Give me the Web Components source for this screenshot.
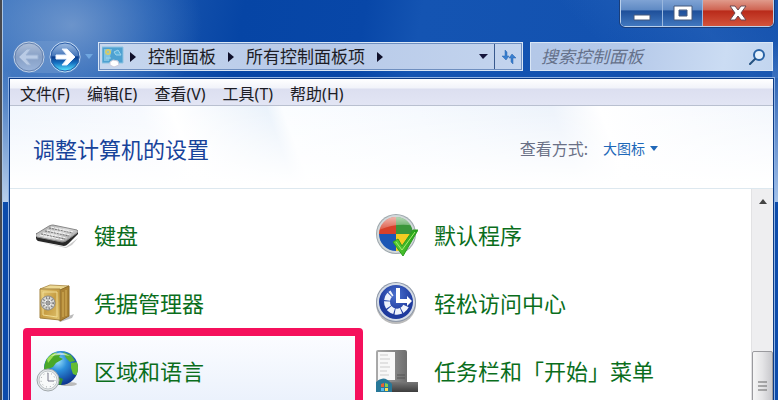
<!DOCTYPE html>
<html lang="zh-CN">
<head>
<meta charset="utf-8">
<title>所有控制面板项</title>
<style>
    body {
        margin: 0;
        height: 100vh;
        overflow: hidden;
        font-family: "Noto Sans", "Noto Sans CJK SC", sans-serif;
        font-size: 16px;
        line-height: 24px;
        color: #1c1c24;
    }
</style>
</head>
<body>
<cp-window>
    <cp-caption slot="caption"></cp-caption>
    <cp-nav slot="bar"></cp-nav>
    <cp-address slot="bar">
        <button>控制面板</button>
        <button>所有控制面板项</button>
    </cp-address>
    <cp-search slot="bar" label="搜索控制面板"></cp-search>
    <cp-menu>
        <button>文件(F)</button>
        <button>编辑(E)</button>
        <button>查看(V)</button>
        <button>工具(T)</button>
        <button>帮助(H)</button>
    </cp-menu>
    <cp-header>调整计算机的设置</cp-header>
    <cp-list>
        <cp-item icon="keyboard">键盘</cp-item>
        <cp-item icon="defaults">默认程序</cp-item>
        <cp-item icon="safe">凭据管理器</cp-item>
        <cp-item icon="access">轻松访问中心</cp-item>
        <cp-item icon="region" marked>区域和语言</cp-item>
        <cp-item icon="taskbar">任务栏和「开始」菜单</cp-item>
    </cp-list>
</cp-window>

<script>
const icons = {
    keyboard: `
        <defs><linearGradient id="k" x2="1" y2="1"><stop stop-color="#999"/><stop offset=".5" stop-color="#dcdcdc"/><stop offset="1" stop-color="#8a8a8a"/></linearGradient></defs>
        <path d="M4 28 30 33 42 24 36 31 30 34Z" fill="#ccc"/>
        <path d="M0 19v5q0 2 2 3l26 5q2 0 4-2l10-10v-3L28 27Z" fill="#282828"/>
        <path d="M0 20 13 12q2-1 4-1l24 5q2 1 0 3L30 27q-2 1-4 1L1 23q-2-1-1-3Z" fill="url(#k)" stroke="#888"/>
        <path d="M5 20l24 5M9 17l24 5M13 14l24 5" stroke="#777" stroke-width="1" stroke-dasharray="2 1" fill="none"/>
        <path d="M4 21l24 5M7 19l24 5M11 16l24 5M15 13l22 5" stroke="#f6f6f6" stroke-dasharray="3 1" fill="none"/>`,
    safe: `
        <defs><linearGradient id="s" x2="1" y2="1"><stop stop-color="#e8cf80"/><stop offset=".5" stop-color="#c79d42"/><stop offset="1" stop-color="#e0c471"/></linearGradient></defs>
        <path d="M22 38 38 32 36 36 24 40Z" fill="#bbb"/>
        <path d="M4 7 14 3 33 4 25 8Z" fill="#edd993" stroke="#b89a5a"/>
        <path d="M24 8 33 4v30l-9 5Z" fill="#ab8233" stroke="#8f6c28"/>
        <path d="M27 10v25M30 8v26" stroke="#d7b25a"/>
        <path d="M4 7h20v31L4 36Z" fill="url(#s)" stroke="#a3823f"/>
        <path d="M7 10h14v25L7 33Z" fill="none" stroke="#f1dc94"/>
        <circle cx="12" cy="21" r="7" fill="#d8d8d4" stroke="#888"/>
        <circle cx="12" cy="21" r="5" fill="none" stroke="#777" stroke-dasharray="1 2" stroke-width="2"/>
        <circle cx="12" cy="21" r="3" fill="#888" stroke="#eee"/>
        <path d="M12 16v10M7 21h10" stroke="#aaa"/>`,
    region: `
        <defs><radialGradient id="g" cx=".4" cy=".3" r=".7"><stop stop-color="#9de2fb"/><stop offset=".4" stop-color="#2d8fdb"/><stop offset="1" stop-color="#0c3590"/></radialGradient>
        <clipPath id="gc"><circle cx="25" cy="18" r="17"/></clipPath></defs>
        <ellipse cx="32" cy="34" rx="9" ry="2" fill="#bbb"/>
        <circle cx="25" cy="18" r="17" fill="url(#g)"/>
        <g clip-path="url(#gc)">
            <path d="M8 19q0-10 9-16l8 1-2 3 4 2-7 4-3 4-5 2 3 5-4 3Z" fill="#48a829"/>
            <path d="M11 9q4-5 10-7l-5 6-4 5Z" fill="#9edf55"/>
            <path d="M27 2l8 3 4 6-5 1-4-4Z" fill="#58b033"/>
            <path d="M35 13l7-1v14l-5-2-2-6Z" fill="#65bd32"/>
            <path d="M20 26l7 3-2 6-6-1Z" fill="#368e30"/>
        </g>
        <path d="M15 6Q24-1 34 6q-9-2-19 0Z" fill="#fff" opacity=".6"/>
        <circle cx="12" cy="30" r="11" fill="#e3e7e9" stroke="#a1a8ab"/>
        <circle cx="12" cy="30" r="9" fill="#f8fafa" stroke="#bfc5c8"/>
        <circle cx="12" cy="30" r="7" fill="none" stroke="#9aa0a4" stroke-width="1" stroke-dasharray="1 3"/>
        <path d="M12 23v8h6" fill="none" stroke="#778" stroke-width="1"/>`,
    defaults: `
        <defs><clipPath id="dc"><circle cx="20" cy="20" r="17"/></clipPath>
        <linearGradient id="ds" y2="1" x2="0"><stop stop-color="#fff" stop-opacity=".7"/><stop offset="1" stop-color="#fff" stop-opacity=".1"/></linearGradient>
        <linearGradient id="dv" x2="1"><stop stop-color="#5ed238"/><stop offset="1" stop-color="#1d9c17"/></linearGradient></defs>
        <circle cx="20" cy="20" r="20" fill="#9fa9ae"/>
        <circle cx="20" cy="20" r="19" fill="#d3d9db"/>
        <g clip-path="url(#dc)">
            <path d="M0 0h20v20H0Z" fill="#d7412a"/><path d="M20 0h22v20H20Z" fill="#3a963a"/>
            <path d="M0 20h20v22H0Z" fill="#1c57b5"/><path d="M20 20h22v22H20Z" fill="#f4cc22"/>
            <path d="M1 1h38v11Q20 8 1 17Z" fill="url(#ds)"/>
        </g>
        <path d="M17 28l5-3 4 7 11-16h5L27 42Z" fill="url(#dv)" stroke="#2e9c22"/>
        <path d="M20 28l6 8 13-18" stroke="#a7ed70" fill="none"/>`,
    access: `
        <defs><radialGradient id="a" cy=".3"><stop stop-color="#4a70cf"/><stop offset="1" stop-color="#1f3b9e"/></radialGradient></defs>
        <circle cx="20" cy="22" r="20" fill="#bbb"/>
        <circle cx="20" cy="20" r="20" fill="#8e98a8"/>
        <circle cx="20" cy="20" r="19" fill="#d5dce6"/>
        <circle cx="20" cy="20" r="17" fill="url(#a)"/>
        <path d="M30 24a10 10 0 1 1-14-13" fill="none" stroke="#eef2fb" stroke-width="6" stroke-dasharray="6 1"/>
        <path d="M20 6h4v11h7v-3l5 5-5 5v-3H20Z" fill="#fff"/>`,
    taskbar: `
        <defs><linearGradient id="t" x2="1"><stop stop-color="#aaa"/><stop offset="1" stop-color="#6e6e6e"/></linearGradient>
        <linearGradient id="tb" x2="0" y2="1"><stop stop-color="#777"/><stop offset="1" stop-color="#3c3c3c"/></linearGradient></defs>
        <path d="M0 2q0-2 2-2h27q2 0 2 2v32H0Z" fill="url(#t)"/>
        <path d="M2 2h17v28H2Z" fill="#f8f8f8"/>
        <path d="M4 5h8M4 9h10M4 13h8M4 17h10M4 21h7M4 25h9" stroke="#ccc"/>
        <path d="M21 25h8M21 28h8" stroke="#555"/>
        <path d="M0 32h42v10H0Z" fill="url(#tb)"/>
        <path d="M0 42V32q8-8 16 2v8Z" fill="#287898"/>
        <path d="M5 34l3-1v4H5Z" fill="#e75f35"/><path d="M9 33l3 1v3H9Z" fill="#8ad04a"/>
        <path d="M5 38h3v3H5Z" fill="#5ab9ed"/><path d="M9 38h3v3H9Z" fill="#ffdd55"/>`
};

// every element renders one template into an open shadow root
class CpElement extends HTMLElement {
    connectedCallback() {
        const template = document.createElement("template");
        template.innerHTML = this.render();
        this.attachShadow({ mode: "open" }).append(template.content.cloneNode(true));
    }
}

const resetButton = `
    button { font: inherit; color: inherit; background: none; border: 0; padding: 0; margin: 0; cursor: pointer; }
    svg { display: block; }
`;

class CpWindow extends CpElement {
    render() {
        return `
            <style>
                :host {
                    display: flex;
                    flex-direction: column;
                    box-sizing: border-box;
                    height: 100vh;
                    overflow: hidden;
                    padding: 0 4px 0 7px;
                    border-left: 2px solid #47494f;
                    box-shadow: inset 1px 0 #a9c4e4;
                    background:
                        radial-gradient(ellipse 130px 100px at 70px 25px, #8cacd6aa, #5a8ccb66 60%, transparent),
                        linear-gradient(transparent 70px, #b8cfec) left top / 9px 202px no-repeat,
                        linear-gradient(transparent 40px, #a4c2ea) right top / 6px 202px no-repeat,
                        linear-gradient(45deg, transparent 74%, #3671c366 88%, #2460b966) top / 100% 78px no-repeat,
                        linear-gradient(100deg, #3b72bd, #0645a5 30%, #0847a8 45%, #1454b2 52%, #1352b0 75%, #0a47a5) top / 100% 202px no-repeat,
                        #0c4bab;
                }
                .caption { display: flex; flex: none; justify-content: flex-end; height: 42px; }
                .bar { display: flex; flex: none; align-items: center; gap: 7px; height: 29px; padding: 0 1px 0 4px; margin-bottom: 7px; }
                .client {
                    display: flex;
                    flex-direction: column;
                    flex: 1;
                    min-height: 0;
                    border: 1px solid #0d3c86;
                    border-bottom: 0;
                    background: #fff;
                    outline: 1px solid #8fb2e4;
                }
            </style>
            <div class="caption"><slot name="caption"></slot></div>
            <div class="bar"><slot name="bar"></slot></div>
            <div class="client"><slot></slot></div>
        `;
    }
}

class CpCaption extends CpElement {
    render() {
        return `
            <style>
                ${resetButton}
                :host {
                    display: flex;
                    height: 26px;
                    border: 1px solid #b9d0ec;
                    border-top: 0;
                    border-radius: 0 0 5px 5px;
                    outline: 1px solid #1a3e7a;
                    overflow: hidden;
                }
                button {
                    display: grid;
                    place-items: center;
                    width: 42px;
                    background: linear-gradient(#7fa3d4, #5f8ac4 38%, #1e4f9a 42%, #4178bf);
                    border-right: 1px solid #9ab8df;
                }
                .max { width: 40px; }
                .close { width: 70px; border: 0; background: linear-gradient(#e09a8b, #cf6452 38%, #b92a1a 42%, #d2543c); }
            </style>
            <button class="min" aria-label="最小化"><svg width="18" height="18"><path d="M1 11h16v5H1Z" fill="#fff" stroke="#44587c"/></svg></button>
            <button class="max" aria-label="最大化"><svg width="20" height="18"><path d="M1 2h18v14H1ZM6 6v6h8V6Z" fill="#fff" fill-rule="evenodd" stroke="#44587c"/></svg></button>
            <button class="close" aria-label="关闭"><svg width="18" height="18"><path d="M1 2h5l3 4 3-4h5l-5 7 5 7h-5l-3-4-3 4H1l5-7Z" fill="#fff" stroke="#6b4850"/></svg></button>
        `;
    }
}

class CpNav extends CpElement {
    render() {
        return `
            <style>
                ${resetButton}
                :host { display: flex; align-items: center; gap: 4px; width: 78px; flex: none; }
                .pair { display: flex; gap: 4px; border-radius: 16px; background: #6e97ce88; }
            </style>
            <div class="pair">
                <button aria-label="后退">
                    <svg width="32" height="32">
                        <defs><linearGradient id="b" x2="0" y2="1"><stop stop-color="#b2c2da"/><stop offset=".5" stop-color="#869fc5"/><stop offset="1" stop-color="#9cb6dc"/></linearGradient></defs>
                        <circle cx="16" cy="16" r="15" fill="url(#b)" stroke="#c2d2e7"/>
                        <circle cx="16" cy="16" r="14" fill="none" stroke="#6683b0"/>
                        <path d="M6 16l8-8h4l-5 6h12v4H13l5 6h-4Z" fill="#b9cbe5" stroke="#9bb2d3"/>
                    </svg>
                </button>
                <button aria-label="前进">
                    <svg width="32" height="32">
                        <defs><linearGradient id="f" x2="0" y2="1"><stop stop-color="#a5c1e5"/><stop offset=".45" stop-color="#4778bb"/><stop offset=".5" stop-color="#0b3b8b"/><stop offset=".7" stop-color="#1672c2"/><stop offset=".95" stop-color="#55e3ff"/></linearGradient></defs>
                        <circle cx="16" cy="16" r="15" fill="url(#f)" stroke="#c2d8f2"/>
                        <circle cx="16" cy="16" r="14" fill="none" stroke="#2a5da8"/>
                        <path d="M7 14h11l-5-6h5l8 8-8 8h-5l5-6H7Z" fill="#fff" stroke="#e5f0ff"/>
                    </svg>
                </button>
            </div>
            <button aria-label="最近浏览的位置"><svg width="8" height="5"><path d="M0 0h8L4 5Z" fill="#70a7e0"/></svg></button>
        `;
    }
}

class CpAddress extends CpElement {
    render() {
        return `
            <style>
                ${resetButton}
                :host {
                    display: flex;
                    align-items: center;
                    flex: 1;
                    min-width: 0;
                    box-sizing: border-box;
                    height: 29px;
                    border: 1px solid #d9e6f6;
                    outline: 1px solid #6f8fc0;
                    outline-offset: -2px;
                    background: linear-gradient(90deg, #c7d7ee, #b7c9e8 50%, #c3d4ee);
                    font-size: 17px;
                }
                .panel { margin: 0 6px 0 3px; }
                .crumbs { display: flex; flex: 1; align-items: center; white-space: nowrap; }
                .crumb { display: flex; align-items: center; }
                .crumb svg { margin: 0 12px; }
                .panel + svg { margin-right: 12px; }
                ::slotted(button) { font: inherit; color: inherit; background: none; border: 0; padding: 0; }
                .drop { padding: 0 6px; }
                .refresh { display: grid; place-items: center; width: 28px; height: 27px; border-left: 1px solid #38598e; }
            </style>
            <svg class="panel" width="22" height="22">
                <path d="M0 1h21v16H0Z" fill="#4ea1d1" stroke="#8dc3e2"/>
                <path d="M2 3h8l-3 12H2Z" fill="#7fc2e3"/>
                <circle cx="6" cy="6" r="2" fill="none" stroke="#d3cb6c" stroke-width="2"/>
                <path d="M12 6l4-2 3 5h-5ZM4 12h5" fill="#58b1dc" stroke="#9ed4ee"/>
                <path d="M8 16l3-2 5 1 1 4-5 2-4-2Z" fill="#fff" stroke="#ccd"/>
            </svg>
            <svg width="6" height="10"><path d="M0 0l6 5-6 5Z" fill="#10102a"/></svg>
            <div class="crumbs"></div>
            <button class="drop" aria-label="以前的位置"><svg width="9" height="5"><path d="M0 0h9L4 5Z" fill="#15153c"/></svg></button>
            <button class="refresh" aria-label="刷新">
                <svg width="16" height="16"><path d="M4 1v6H1l4 4 3-4H6V3ZM12 15V9h3l-4-4-3 4h2v4Z" fill="#397fd0" stroke="#2b65ad" stroke-width=".5"/></svg>
            </button>
        `;
    }
    connectedCallback() {
        super.connectedCallback();
        const crumbs = this.shadowRoot.querySelector(".crumbs");
        Array.from(this.querySelectorAll("button")).forEach((button, i) => {
            button.slot = "crumb" + i;
            const crumb = document.createElement("div");
            crumb.className = "crumb";
            crumb.innerHTML = `<slot name="crumb${i}"></slot><svg width="6" height="10"><path d="M0 0l6 5-6 5Z" fill="#10102a"/></svg>`;
            crumbs.append(crumb);
        });
    }
}

class CpSearch extends CpElement {
    render() {
        const label = this.getAttribute("label");
        return `
            <style>
                ${resetButton}
                :host {
                    display: flex;
                    align-items: center;
                    box-sizing: border-box;
                    width: 36%;
                    max-width: 243px;
                    height: 29px;
                    padding: 0 7px 0 10px;
                    border: 1px solid #d9e6f6;
                    background: linear-gradient(100deg, #b4c8e8, #b5c9e9 40%, #cbdcf3 80%, #c2d5ef);
                }
                input { flex: 1; min-width: 0; padding: 0; border: 0; outline: 0; background: none; font: inherit; font-size: 17px; }
                input::placeholder { color: #65718a; opacity: 1; font-style: italic; }
            </style>
            <input type="text" aria-label="${label}" placeholder="${label}">
            <button aria-label="搜索"><svg width="16" height="16"><circle cx="10" cy="6" r="5" fill="#e6f1fc" stroke="#2963a5" stroke-width="2"/><path d="M6 10l-5 5" stroke="#24517f" stroke-width="2" stroke-linecap="round"/></svg></button>
        `;
    }
}

class CpMenu extends CpElement {
    render() {
        return `
            <style>
                :host {
                    display: flex;
                    flex: none;
                    align-items: center;
                    gap: 17px;
                    box-sizing: border-box;
                    height: 27px;
                    padding: 3px 10px 0;
                    background: linear-gradient(#fff, #f1f3fa 9px, #dcdff0 10px, #e2e5f4);
                    border-bottom: 1px solid #b9c0d0;
                }
                ::slotted(button) { font: inherit; color: inherit; background: none; border: 0; padding: 0; margin: 0; }
            </style>
            <slot></slot>
        `;
    }
}

class CpHeader extends CpElement {
    render() {
        return `
            <style>
                :host {
                    display: flex;
                    flex: none;
                    align-items: center;
                    box-sizing: border-box;
                    height: 83px;
                    padding: 3px 115px 0 23px;
                    background:
                        linear-gradient(transparent, #fff 95%),
                        linear-gradient(70deg, #eff5fd, #f6f9fe 20%, #fff 24%, #eaf2fb 36%, #fbfdff 38%, #f5f9fe 55%, #edf3fb 72%, #fff 78%, #f3f7fd);
                    border-bottom: 1px solid #dde8ef;
                }
                h1 { flex: 1; margin: 0; font-size: 22px; font-weight: 400; line-height: 32px; color: #17439a; }
                label { margin-right: 15px; color: #6a7086; }
                .view { display: flex; align-items: center; gap: 5px; color: #2068b8; }
                select { appearance: none; border: 0; padding: 0; background: none; color: inherit; font: inherit; font-size: 14px; }
            </style>
            <h1><slot></slot></h1>
            <label for="view">查看方式:</label>
            <div class="view">
                <select id="view"><option>大图标</option></select>
                <svg width="8" height="5"><path d="M0 0h8L4 5Z" fill="#2068b8"/></svg>
            </div>
        `;
    }
}

class CpList extends CpElement {
    render() {
        return `
            <style>
                :host { display: flex; flex: 1; align-items: flex-start; min-height: 0; overflow: hidden; }
                .items {
                    flex: 1;
                    display: grid;
                    grid-template-columns: repeat(auto-fill, 340px);
                    grid-auto-rows: 68px;
                    padding: 12px 0 36px 13px;
                }
                cp-scrollbar { align-self: flex-start; height: 252px; }
            </style>
            <div class="items"><slot></slot></div>
            <cp-scrollbar></cp-scrollbar>
        `;
    }
}

class CpItem extends CpElement {
    render() {
        return `
            <style>
                :host { display: block; position: relative; }
                a {
                    display: flex;
                    align-items: center;
                    gap: 16px;
                    height: 100%;
                    padding-left: 13px;
                    font-size: 22px;
                    color: #0a6e1c;
                    text-decoration: none;
                }
                :host([marked]) a { background: linear-gradient(#fbfcff, #eaf1fc); }
                :host([marked])::after {
                    content: "";
                    position: absolute;
                    inset: -9px 0;
                    border: 8px solid #f5105c;
                    border-radius: 4px;
                }
                svg { flex: none; }
            </style>
            <a href="#">
                <svg width="42" height="42" viewBox="0 0 42 42">${icons[this.getAttribute("icon")]}</svg>
                <span><slot></slot></span>
            </a>
        `;
    }
}

class CpScrollbar extends CpElement {
    render() {
        return `
            <style>
                ${resetButton}
                :host { display: flex; flex-direction: column; width: 21px; background: #eeeef0; border-left: 1px solid #e2e2e4; }
                button { display: grid; place-items: center; height: 24px; }
                .track { flex: 1; }
                .thumb {
                    display: grid;
                    place-items: center;
                    box-sizing: border-box;
                    height: 70px;
                    border: 1px solid #9a9a9e;
                    border-radius: 2px;
                    background: linear-gradient(90deg, #f6f6f6, #e4e4e6 50%, #c8c8cc);
                }
                .down { height: 20px; }
            </style>
            <button aria-label="向上"><svg width="8" height="5"><path d="M0 5h8L4 0Z" fill="#444"/></svg></button>
            <div class="track"></div>
            <div class="thumb"><svg width="9" height="10"><path d="M0 1h9M0 5h9M0 9h9" stroke="#666"/></svg></div>
            <button class="down" aria-label="向下"><svg width="8" height="5"><path d="M0 0h8L4 5Z" fill="#444"/></svg></button>
        `;
    }
}

customElements.define("cp-window", CpWindow);
customElements.define("cp-caption", CpCaption);
customElements.define("cp-nav", CpNav);
customElements.define("cp-address", CpAddress);
customElements.define("cp-search", CpSearch);
customElements.define("cp-menu", CpMenu);
customElements.define("cp-header", CpHeader);
customElements.define("cp-scrollbar", CpScrollbar);
customElements.define("cp-list", CpList);
customElements.define("cp-item", CpItem);
</script>
</body>
</html>
